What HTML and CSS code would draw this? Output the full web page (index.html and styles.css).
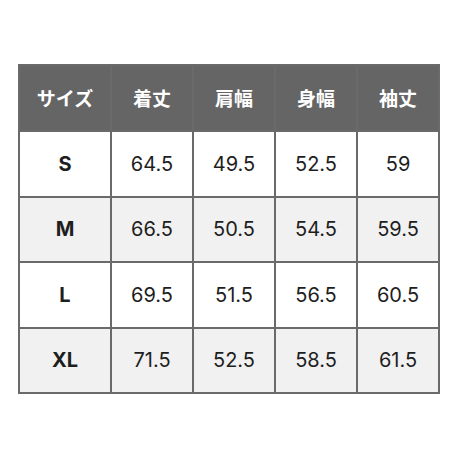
FILE: index.html
```html
<!DOCTYPE html>
<html lang="ja">
<head>
<meta charset="utf-8">
<link rel="stylesheet" href="styles.css">
</head>
<body>
<div class="wrap">
<table class="size-table">
  <colgroup>
    <col class="c-size"><col class="c-val"><col class="c-val"><col class="c-val"><col class="c-val">
  </colgroup>
  <thead>
    <tr><th>サイズ</th><th>着丈</th><th>肩幅</th><th>身幅</th><th>袖丈</th></tr>
  </thead>
  <tbody>
    <tr class="odd"><td class="label">S</td><td>64.5</td><td>49.5</td><td>52.5</td><td>59</td></tr>
    <tr class="even"><td class="label">M</td><td>66.5</td><td>50.5</td><td>54.5</td><td>59.5</td></tr>
    <tr class="odd"><td class="label">L</td><td>69.5</td><td>51.5</td><td>56.5</td><td>60.5</td></tr>
    <tr class="even"><td class="label">XL</td><td>71.5</td><td>52.5</td><td>58.5</td><td>61.5</td></tr>
  </tbody>
</table>
</div>
</body>
</html>
```

FILE: styles.css
```css
html, body {
  margin: 0;
  padding: 0;
  background: #ffffff;
}
.wrap {
  padding: 64px 0 0 18px;
}
.size-table {
  border-collapse: collapse;
  width: 422px;
  table-layout: fixed;
  font-family: Inter, "Liberation Sans", "Noto Sans CJK JP", sans-serif;
  color: #1e1e1e;
}
.c-size { width: 92px; }
.c-val { width: 82px; }
.size-table th,
.size-table td {
  border: 2px solid #6a6a6a;
  text-align: center;
  vertical-align: middle;
  padding: 0;
}
.size-table th {
  background: #656565;
  color: #ffffff;
  font-family: "Noto Sans CJK JP", sans-serif;
  font-weight: 700;
  font-size: 19px;
  height: 62px;
  padding-bottom: 2px;
}
.size-table td {
  font-size: 20px;
  height: 63.5px;
}
.size-table td.label {
  font-weight: 700;
}
.odd td { background: #ffffff; }
.even td { background: #f1f1f1; }
```
